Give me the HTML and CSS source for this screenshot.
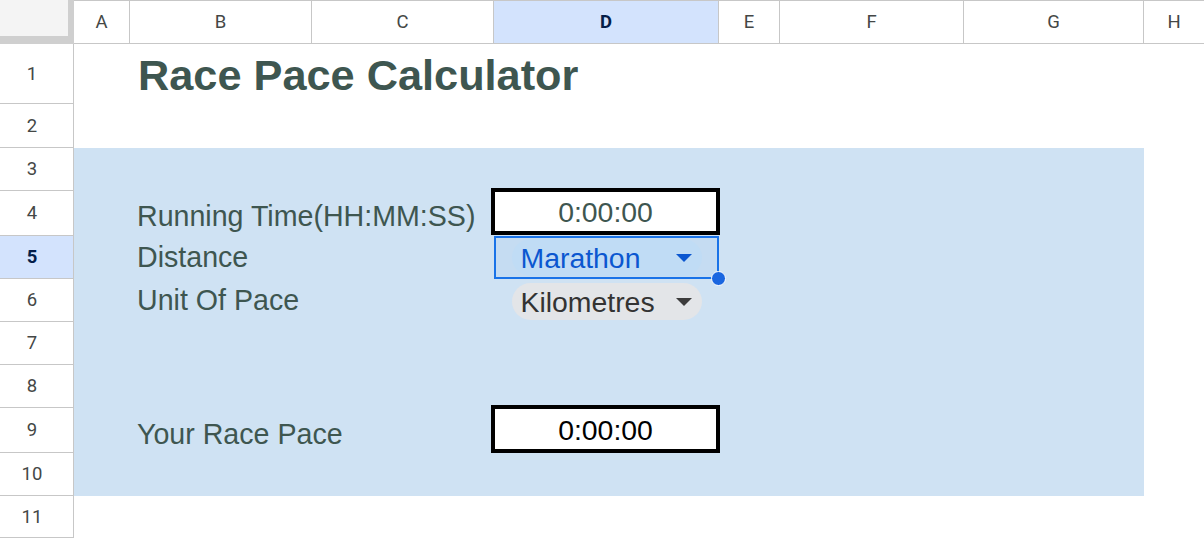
FILE: index.html
```html
<!DOCTYPE html>
<html lang="en">
<head>
<meta charset="utf-8">
<title>Race Pace Calculator</title>
<link rel="stylesheet" href="styles.css">
</head>
<body>
<div class="sheet">
  <div class="header-row">
    <div class="corner"></div>
    <div class="colhead w-a">A</div>
    <div class="colhead w-b">B</div>
    <div class="colhead w-c">C</div>
    <div class="colhead w-d sel">D</div>
    <div class="colhead w-e">E</div>
    <div class="colhead w-f">F</div>
    <div class="colhead w-g">G</div>
    <div class="colhead w-h">H</div>
  </div>
  <div class="body">
    <div class="rownums">
      <div class="rownum h60">1</div>
      <div class="rownum h44">2</div>
      <div class="rownum h43">3</div>
      <div class="rownum h45">4</div>
      <div class="rownum h43 sel">5</div>
      <div class="rownum h43">6</div>
      <div class="rownum h43">7</div>
      <div class="rownum h43">8</div>
      <div class="rownum h45">9</div>
      <div class="rownum h43">10</div>
      <div class="rownum h42">11</div>
    </div>
    <div class="cells">
      <div class="title">Race Pace Calculator</div>
      <div class="band"></div>
      <div class="label l-time">Running Time(HH:MM:SS)</div>
      <div class="timebox">0:00:00</div>
      <div class="label l-dist">Distance</div>
      <div class="dist-cell">
        <div class="chip chip-blue"><span>Marathon</span><svg class="caret" width="16" height="8" viewBox="0 0 16 8"><polygon points="0,0 16,0 8,8" fill="#0b57d0"/></svg></div>
        <div class="handle"></div>
      </div>
      <div class="label l-unit">Unit Of Pace</div>
      <div class="unit-cell">
        <div class="chip chip-gray"><span>Kilometres</span><svg class="caret" width="16" height="8" viewBox="0 0 16 8"><polygon points="0,0 16,0 8,8" fill="#3c3c3c"/></svg></div>
      </div>
      <div class="label l-pace">Your Race Pace</div>
      <div class="resultbox">0:00:00</div>
    </div>
  </div>
</div>
</body>
</html>
```
FILE: styles.css
```css
* { box-sizing: border-box; }

body {
  margin: 0;
  width: 1204px;
  height: 540px;
  overflow: hidden;
  background: #ffffff;
  font-family: "Liberation Sans", Arial, sans-serif;
}

.sheet {
  display: flex;
  flex-direction: column;
}

/* column headers */
.header-row {
  display: flex;
  height: 44px;
}

.corner {
  flex: none;
  width: 74px;
  height: 44px;
  background: #f4f4f4;
  border-right: 6px solid #cfcfcf;
  border-bottom: 8px solid #cfcfcf;
}

.colhead {
  flex: none;
  height: 44px;
  display: flex;
  align-items: center;
  justify-content: center;
  border-top: 1px solid #c7c7c7;
  border-bottom: 1px solid #c7c7c7;
  border-right: 1px solid #c7c7c7;
  font-family: Roboto, "Liberation Sans", sans-serif;
  font-size: 18.5px;
  color: #444746;
}

.colhead.sel,
.rownum.sel {
  background: #d3e3fd;
  color: #041e49;
  font-weight: bold;
}

.w-a { width: 56px; }
.w-b { width: 182px; }
.w-c { width: 182px; }
.w-d { width: 225px; }
.w-e { width: 61px; }
.w-f { width: 184px; }
.w-g { width: 180px; }
.w-h { width: 60px; border-right: none; }

/* body */
.body {
  display: flex;
}

.rownums {
  flex: none;
  width: 74px;
  display: flex;
  flex-direction: column;
}

.rownum {
  display: flex;
  align-items: center;
  justify-content: center;
  padding-right: 9px;
  border-right: 1px solid #c7c7c7;
  border-bottom: 1px solid #c7c7c7;
  font-family: Roboto, "Liberation Sans", sans-serif;
  font-size: 18.5px;
  color: #444746;
}

.h60 { height: 60px; }
.h45 { height: 45px; }
.h44 { height: 44px; }
.h43 { height: 43px; }
.h42 { height: 42px; }

.cells {
  display: grid;
  grid-template-columns: 56px 182px 182px 225px 61px 184px 180px 60px;
  grid-template-rows: 60px 44px 43px 45px 43px 43px 43px 43px 45px 43px 42px;
}

.title {
  grid-column: 2 / 6;
  grid-row: 1;
  align-self: end;
  padding: 0 0 7px 8px;
  font-size: 43.3px;
  line-height: 43px;
  font-weight: bold;
  color: #3e5650;
  white-space: nowrap;
}

.band {
  grid-column: 1 / 8;
  grid-row: 3 / 11;
  background: #cfe2f3;
}

.label {
  grid-column: 2 / 4;
  align-self: end;
  padding-left: 7px;
  font-size: 28.6px;
  line-height: 32px;
  color: #3e5650;
  white-space: nowrap;
}

.l-time { grid-row: 4; padding-bottom: 4px; }
.l-dist { grid-row: 5; padding-bottom: 6px; }
.l-unit { grid-row: 6; padding-bottom: 6px; }
.l-pace { grid-row: 9; padding-bottom: 3px; }

.timebox,
.resultbox {
  grid-column: 4;
  display: flex;
  align-items: center;
  justify-content: center;
  border: 4px solid #000000;
  background: #ffffff;
  font-size: 28.4px;
  line-height: 32px;
}

.timebox {
  grid-row: 4;
  margin: -3px -1px 1px -3px;
  color: #3e5650;
}

.resultbox {
  grid-row: 9;
  margin: -3px -1px 0 -3px;
  color: #000000;
  padding-top: 2px;
}

.dist-cell {
  grid-column: 4;
  grid-row: 5;
  position: relative;
  display: flex;
  align-items: center;
  justify-content: center;
  border: 2px solid #1a73e8;
  background: rgba(26, 115, 232, 0.05);
}

.unit-cell {
  grid-column: 4;
  grid-row: 6;
  display: flex;
  align-items: flex-start;
  justify-content: center;
  padding-top: 4px;
}

.chip {
  width: 190px;
  height: 37px;
  border-radius: 19px;
  display: flex;
  align-items: center;
  justify-content: space-between;
  padding: 0 10px 0 9px;
  font-size: 28.4px;
  line-height: 32px;
  white-space: nowrap;
}

.chip-blue {
  background: #c0dcf5;
  color: #0b57d0;
}

.chip-gray {
  background: #e3e5e8;
  color: #333333;
}

.caret {
  display: block;
  flex: none;
}

.handle {
  position: absolute;
  right: -9px;
  bottom: -9px;
  width: 15px;
  height: 15px;
  border-radius: 50%;
  background: #1a66e0;
  border: 1px solid #ffffff;
}
```
